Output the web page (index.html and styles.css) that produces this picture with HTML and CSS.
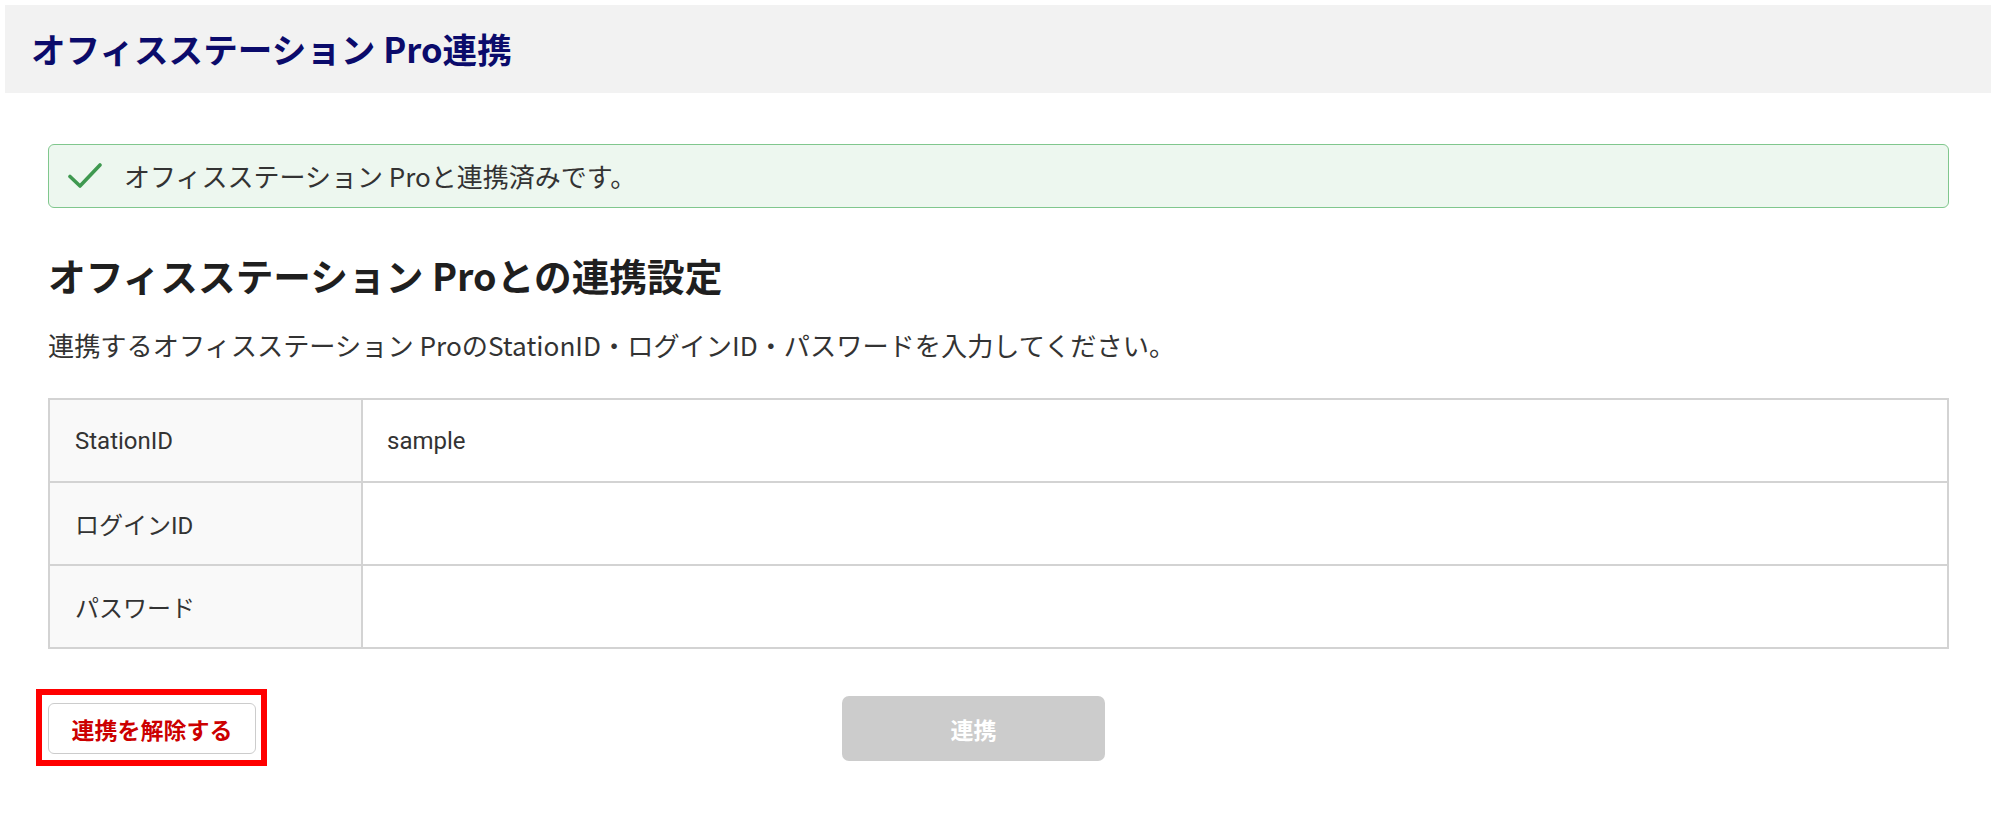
FILE: index.html
```html
<!DOCTYPE html>
<html lang="ja">
<head>
<meta charset="utf-8">
<title>オフィスステーション Pro連携</title>
<link rel="stylesheet" href="styles.css">
</head>
<body>
<div class="page">
  <header class="page-header">
    <h1 class="page-title">オフィスステーション Pro連携</h1>
  </header>
  <main class="content">
    <div class="alert-success">
      <svg class="alert-icon" viewBox="0 0 34 26" width="34" height="26" aria-hidden="true">
        <path d="M2 13.5 L12 23 L32 2" fill="none" stroke="#3f9950" stroke-width="3.6" stroke-linecap="round" stroke-linejoin="round"/>
      </svg>
      <span class="alert-text">オフィスステーション Proと連携済みです。</span>
    </div>
    <h2 class="section-title">オフィスステーション Proとの連携設定</h2>
    <p class="section-desc">連携するオフィスステーション ProのStationID・ログインID・パスワードを入力してください。</p>
    <table class="settings-table">
      <tr>
        <th>StationID</th>
        <td>sample</td>
      </tr>
      <tr>
        <th>ログインID</th>
        <td></td>
      </tr>
      <tr>
        <th>パスワード</th>
        <td></td>
      </tr>
    </table>
    <div class="actions">
      <button class="btn-unlink" type="button">連携を解除する</button>
      <button class="btn-link" type="button" disabled>連携</button>
    </div>
  </main>
</div>
</body>
</html>
```

FILE: styles.css
```css
* {
  box-sizing: border-box;
}

html, body {
  margin: 0;
  padding: 0;
  background: #ffffff;
}

body {
  font-family: "Noto Sans CJK JP", "Noto Sans", sans-serif;
  color: #333333;
}

.page {
  padding: 5px 7px 0 5px;
}

.page-header {
  background: #f2f2f2;
  height: 88px;
  display: flex;
  align-items: center;
  padding-left: 26px;
}

.page-title {
  margin: 0;
  font-size: 34.6px;
  font-weight: 700;
  color: #0b0b6b;
  line-height: 1.2;
}

.content {
  padding: 51px 42px 40px 43px;
}

.alert-success {
  display: flex;
  align-items: center;
  height: 64px;
  padding-left: 19px;
  background: #edf7ef;
  border: 1px solid #80c78d;
  border-radius: 6px;
}

.alert-icon {
  flex: none;
  margin-right: 22px;
}

.alert-text {
  font-size: 26px;
  color: #333333;
  line-height: 1;
}

.section-title {
  margin: 42px 0 0;
  font-size: 37.7px;
  font-weight: 700;
  color: #1f1f1f;
  line-height: 50px;
}

.section-desc {
  margin: 25px 0 0;
  font-size: 26.2px;
  line-height: 40px;
  color: #333333;
}

.settings-table {
  margin-top: 33px;
  width: 100%;
  border-collapse: collapse;
  font-family: Roboto, "Noto Sans CJK JP", sans-serif;
  font-size: 24px;
  color: #333333;
}

.settings-table th,
.settings-table td {
  border: 2px solid #d3d3d3;
  height: 83px;
  text-align: left;
  vertical-align: middle;
  font-weight: 400;
}

.settings-table th {
  width: 313px;
  background: #f9f9f9;
  padding: 0 0 0 25px;
}

.settings-table td {
  background: #ffffff;
  padding: 0 0 0 24px;
}

.actions {
  margin-top: 47px;
  display: flex;
  align-items: center;
}

.btn-unlink {
  position: relative;
  width: 208px;
  height: 51px;
  background: #ffffff;
  border: 1px solid #cccccc;
  border-radius: 6px;
  color: #cc0000;
  font-family: "Noto Sans CJK JP", sans-serif;
  font-size: 23px;
  font-weight: 700;
  padding: 0;
}

.btn-unlink::after {
  content: "";
  position: absolute;
  left: -13px;
  top: -15px;
  right: -12px;
  bottom: -13px;
  border: 6px solid #ff0000;
  pointer-events: none;
}

.btn-link {
  margin-left: 586px;
  width: 263px;
  height: 65px;
  background: #cccccc;
  border: none;
  border-radius: 7px;
  color: #ffffff;
  font-family: "Noto Sans CJK JP", sans-serif;
  font-size: 23px;
  font-weight: 700;
  padding: 0;
}
```
